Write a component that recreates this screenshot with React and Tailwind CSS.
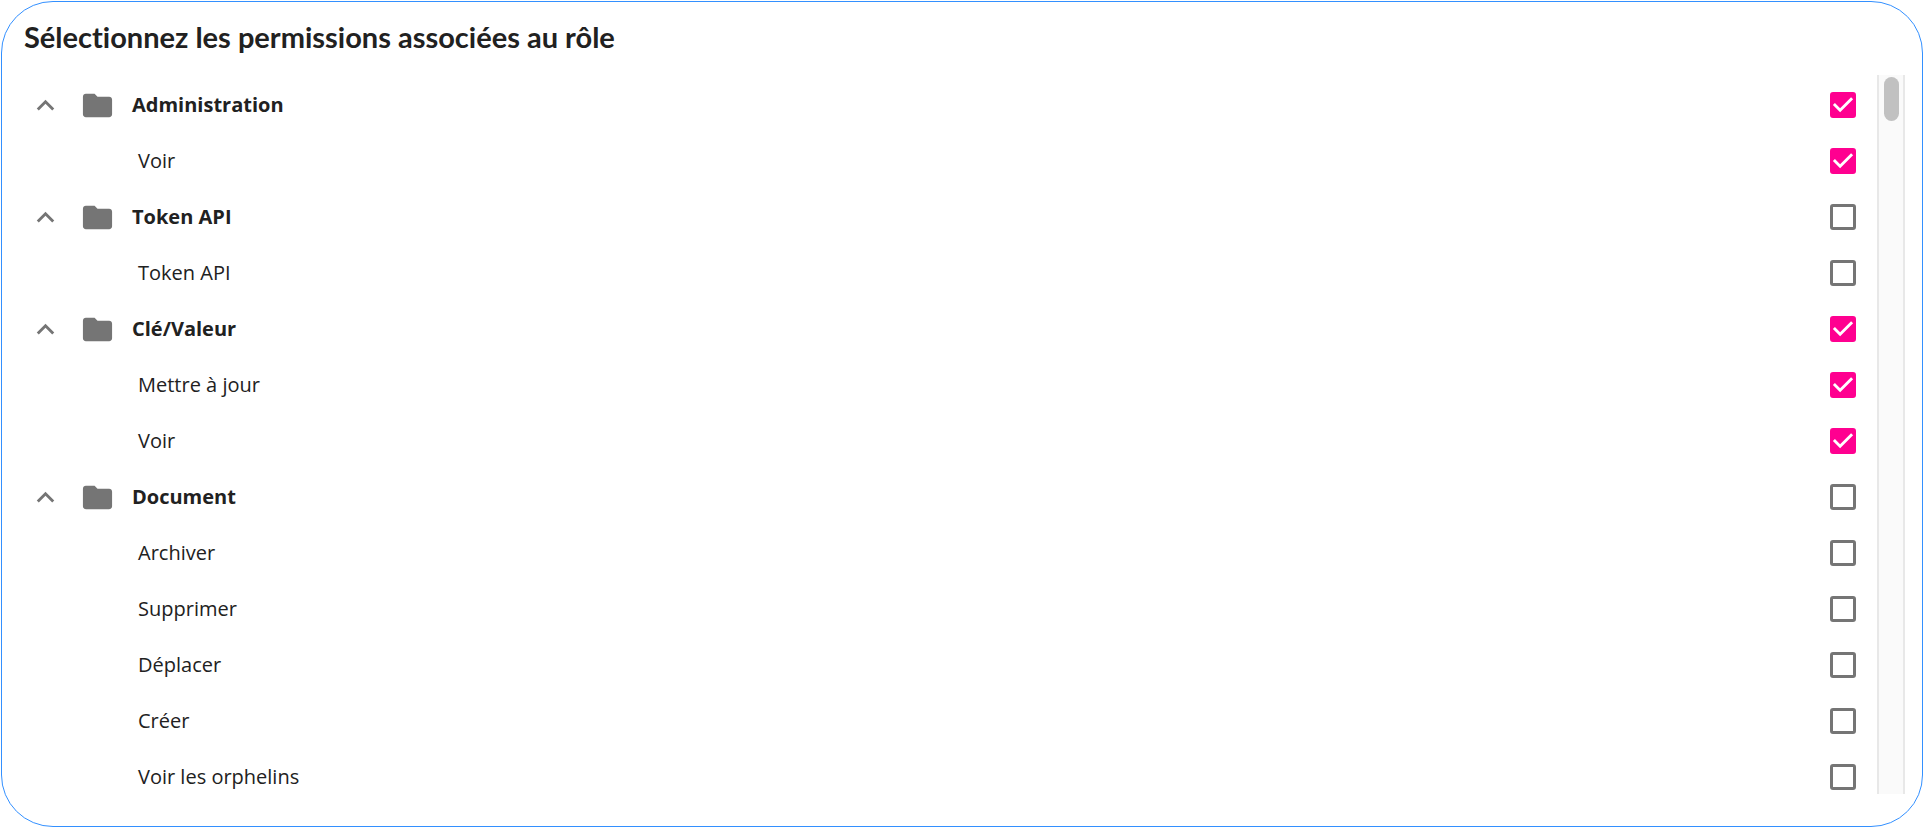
import { useState } from 'react';

const groups = [
  {
    id: 'admin',
    label: 'Administration',
    permissions: [{ id: 'admin.view', label: 'Voir' }],
  },
  {
    id: 'token',
    label: 'Token API',
    permissions: [{ id: 'token.api', label: 'Token API' }],
  },
  {
    id: 'keyvalue',
    label: 'Clé/Valeur',
    permissions: [
      { id: 'keyvalue.update', label: 'Mettre à jour' },
      { id: 'keyvalue.view', label: 'Voir' },
    ],
  },
  {
    id: 'document',
    label: 'Document',
    permissions: [
      { id: 'document.archive', label: 'Archiver' },
      { id: 'document.delete', label: 'Supprimer' },
      { id: 'document.move', label: 'Déplacer' },
      { id: 'document.create', label: 'Créer' },
      { id: 'document.orphans', label: 'Voir les orphelins' },
    ],
  },
];

function Checkbox({ id, checked, onChange }) {
  return (
    <span className="grid size-[26px] shrink-0">
      <input
        id={id}
        type="checkbox"
        checked={checked}
        onChange={onChange}
        className="col-start-1 row-start-1 size-full cursor-pointer appearance-none rounded-[3px] border-3 border-[#757575] checked:border-[#ff0090] checked:bg-[#ff0090]"
      />
      {checked && (
        <svg viewBox="3 3 18 18" className="pointer-events-none col-start-1 row-start-1 size-full text-white" fill="currentColor">
          <path d="M10 17l-5-5 1.41-1.41L10 14.17l7.59-7.59L19 8l-9 9z" />
        </svg>
      )}
    </span>
  );
}

function GroupRow({ group, open, checked, onToggle, onCheck }) {
  return (
    <div className="flex h-14 items-center">
      <button
        type="button"
        onClick={onToggle}
        aria-expanded={open}
        aria-label={group.label}
        className="mr-[17px] shrink-0 cursor-pointer text-[#757575]"
      >
        <svg viewBox="0 0 24 24" className={`size-[35px] ${open ? '' : 'rotate-180'}`} fill="currentColor">
          <path d="M12 8l-6 6 1.41 1.41L12 10.83l4.59 4.58L18 14z" />
        </svg>
      </button>
      <svg viewBox="0 0 24 24" className="mr-[17px] size-[35px] shrink-0 text-[#757575]" fill="currentColor">
        <path d="M10 4H4c-1.1 0-1.99.9-1.99 2L2 18c0 1.1.9 2 2 2h16c1.1 0 2-.9 2-2V8c0-1.1-.9-2-2-2h-8l-2-2z" />
      </svg>
      <label htmlFor={group.id} className="flex-1 cursor-pointer font-bold">
        {group.label}
      </label>
      <Checkbox id={group.id} checked={checked} onChange={onCheck} />
    </div>
  );
}

export default function App() {
  const [selected, setSelected] = useState(['admin.view', 'keyvalue.update', 'keyvalue.view']);
  const [closed, setClosed] = useState([]);

  const togglePermission = (id) => {
    setSelected(prev => (prev.includes(id) ? prev.filter(p => p !== id) : [...prev, id]));
  };

  const toggleOpen = (id) => {
    setClosed(prev => (prev.includes(id) ? prev.filter(g => g !== id) : [...prev, id]));
  };

  // Checking a group selects all of its permissions, unchecking clears them
  const toggleGroup = (group, checked) => {
    const ids = group.permissions.map(p => p.id);
    setSelected(prev => {
      const others = prev.filter(p => !ids.includes(p));
      return checked ? others : [...others, ...ids];
    });
  };

  return (
    <div className="h-screen bg-white p-px text-[#212121]">
      <div className="flex h-full flex-col rounded-[52px] border border-[#3390ff] pt-[15px] pr-[17px] pb-8 pl-[22px]">
        <h1 className="mb-[18px] font-['Lato',sans-serif] text-[29px] leading-10 font-bold [font-variant-ligatures:none]">
          Sélectionnez les permissions associées au rôle
        </h1>

        <div className="flex min-h-0 flex-1">
          <div className="flex-1 [scrollbar-width:none] overflow-y-auto pt-0.5 pr-[21px] pl-1 font-['Open_Sans',sans-serif] text-xl">
            {groups.map(group => {
              const open = !closed.includes(group.id);
              const checked = group.permissions.every(p => selected.includes(p.id));

              return (
                <div key={group.id}>
                  <GroupRow
                    group={group}
                    open={open}
                    checked={checked}
                    onToggle={() => toggleOpen(group.id)}
                    onCheck={() => toggleGroup(group, checked)}
                  />
                  {open && group.permissions.map(permission => (
                    <div key={permission.id} className="flex h-14 items-center pl-[110px]">
                      <label htmlFor={permission.id} className="flex-1 cursor-pointer">
                        {permission.label}
                      </label>
                      <Checkbox
                        id={permission.id}
                        checked={selected.includes(permission.id)}
                        onChange={() => togglePermission(permission.id)}
                      />
                    </div>
                  ))}
                </div>
              );
            })}
          </div>

          {/* Scroll track */}
          <div className="flex w-7 justify-center border-x-2 border-[#e8e8e8] bg-[#fafafa] pt-0.5">
            <div className="h-11 w-[15px] rounded-full bg-[#c1c1c1]" />
          </div>
        </div>
      </div>
    </div>
  );
}
